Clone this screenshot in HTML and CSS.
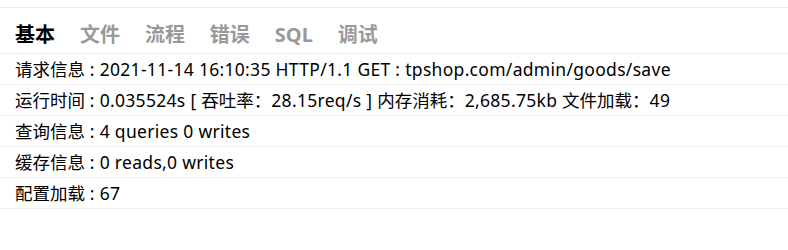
FILE: index.html
```html
<!DOCTYPE html>
<html lang="zh-CN">
<head>
<meta charset="utf-8">
<title>Trace</title>
<link rel="stylesheet" href="styles.css">
</head>
<body>
<div class="trace">
  <div class="tabs">
    <span class="tab active">基本</span>
    <span class="tab">文件</span>
    <span class="tab">流程</span>
    <span class="tab">错误</span>
    <span class="tab">SQL</span>
    <span class="tab">调试</span>
  </div>
  <div class="panel">
    <ol class="list">
      <li class="row"><span class="zh">请求信息</span> : 2021-11-14 16:10:35 HTTP/1.1 GET : tpshop.com/admin/goods/save</li>
      <li class="row"><span class="zh">运行时间</span> : 0.035524s [ <span class="zh">吞吐率：</span>28.15req/s ] <span class="zh">内存消耗：</span>2,685.75kb <span class="zh">文件加载：</span>49</li>
      <li class="row"><span class="zh">查询信息</span> : 4 queries 0 writes</li>
      <li class="row"><span class="zh">缓存信息</span> : 0 reads,0 writes</li>
      <li class="row"><span class="zh">配置加载</span> : 67</li>
    </ol>
  </div>
</div>
</body>
</html>
```
FILE: styles.css
```css
html, body {
  margin: 0;
  padding: 0;
  background: #fff;
}
body {
  padding-top: 7px;
  font-family: "Noto Sans", "Noto Sans CJK SC", sans-serif;
  color: #000;
}
.trace {
  width: 100%;
}
.tabs {
  height: 37.5px;
  padding: 7.5px 15px 0;
  border-top: 1px solid #ececec;
  border-bottom: 1px solid #ececec;
  font-size: 20px;
  white-space: nowrap;
}
.tab {
  display: inline-block;
  height: 37.5px;
  line-height: 37.5px;
  padding-right: 15px;
  margin-right: 4.75px;
  font-weight: 700;
  color: #999;
}
.tab.active {
  color: #000;
}
.panel {
  line-height: 30px;
}
.list {
  list-style: none;
  margin: 0;
  padding: 0;
}
.row {
  border-bottom: 1px solid #eee;
  font-size: 17.5px;
  letter-spacing: 0.3px;
  padding: 0 15px;
  white-space: nowrap;
}
.zh {
  letter-spacing: 0;
}
```
